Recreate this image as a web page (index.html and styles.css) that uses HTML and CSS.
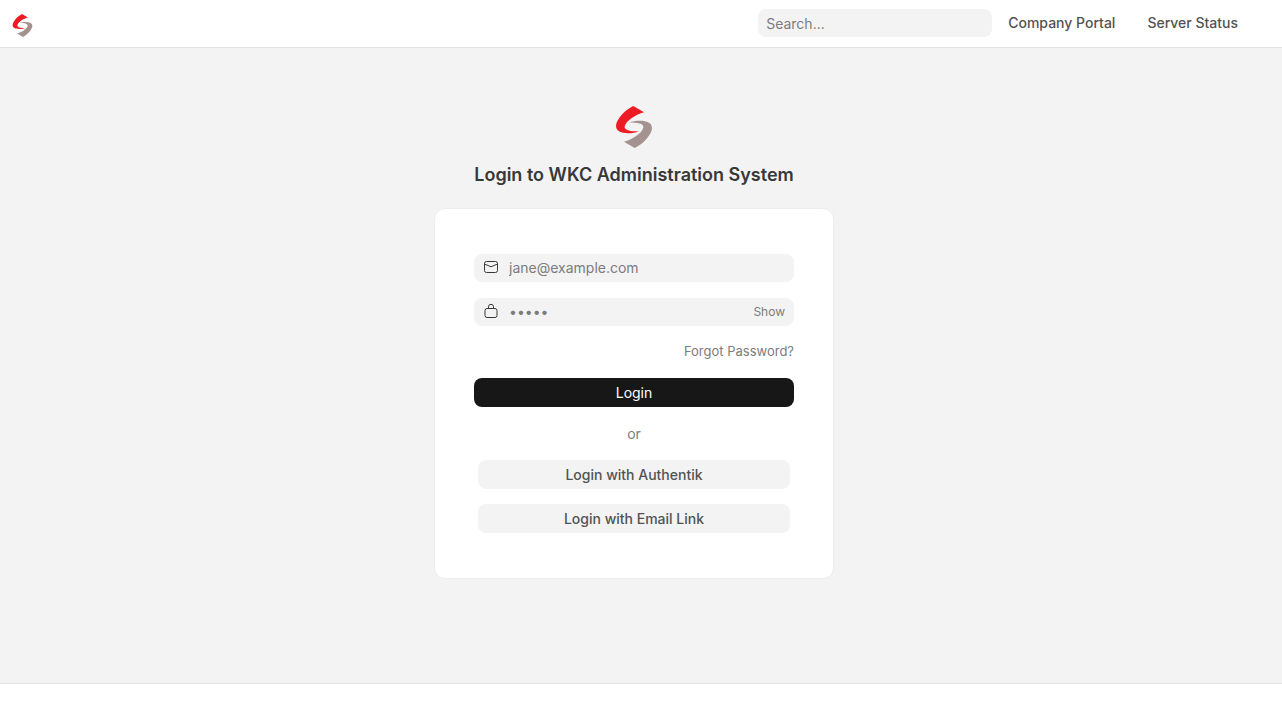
FILE: index.html
```html
<!DOCTYPE html>
<html lang="en">
<head>
<meta charset="utf-8">
<meta name="viewport" content="width=device-width, initial-scale=1">
<title>Login</title>
<link rel="stylesheet" href="styles.css">
</head>
<body>
<svg class="symbols" aria-hidden="true">
  <symbol id="logo" viewBox="0 0 36 42">
    <path fill="#ed1c24" d="M17.3 0 28 6.3C20 8.500 10 14.500 8.700 20.500C8 24.500 15 25.500 23 25.400C17 27.500 8 28 3.500 25.500C-0.800 23.500-0.800 18.500 2 14C5 8.500 11 3 17.300 0Z"/>
    <path fill="#a3928f" d="M18.700 42 8 35.700C16 33.500 26 27.500 27.300 21.500C28 17.500 21 16.500 13 16.600C19 14.500 28 14 32.500 16.500C36.800 18.500 36.800 23.500 34 28C31 33.500 25 39 18.700 42Z"/>
  </symbol>
</svg>
<header class="navbar">
  <a class="brand" href="#" aria-label="Home"><svg class="brand-logo"><use href="#logo"/></svg></a>
  <nav class="nav">
    <input class="search" type="search" placeholder="Search..." aria-label="Search">
    <a class="nav-link" href="#">Company Portal</a>
    <a class="nav-link" href="#">Server Status</a>
  </nav>
</header>
<main class="page">
  <div class="head">
    <svg class="app-logo" aria-hidden="true"><use href="#logo"/></svg>
    <h1 class="title">Login to WKC Administration System</h1>
  </div>
  <form class="card">
    <div class="field">
      <svg class="icon" viewBox="0 0 16 16" aria-hidden="true"><rect x="1.500" y="2.500" width="13" height="11" rx="2"/><path d="M1.500 5 8 7.800 14.500 5"/></svg>
      <input class="input" type="email" placeholder="jane@example.com" aria-label="Email">
    </div>
    <div class="field">
      <svg class="icon" viewBox="0 0 16 16" aria-hidden="true"><rect x="2" y="5.500" width="12" height="9" rx="2"/><path d="M5.500 5.500V3.800a2.500 2.500 0 0 1 5 0v1.700"/></svg>
      <input class="input" type="password" placeholder="•••••" aria-label="Password">
      <button class="show" type="button">Show</button>
    </div>
    <a class="forgot" href="#">Forgot Password?</a>
    <button class="btn btn-primary" type="button">Login</button>
    <p class="or">or</p>
    <div class="alternatives">
      <button class="btn" type="button">Login with Authentik</button>
      <button class="btn" type="button">Login with Email Link</button>
    </div>
  </form>
</main>
<footer class="footer"></footer>
</body>
</html>
```

FILE: styles.css
```css
* { box-sizing: border-box; }

body {
  margin: 0;
  min-height: 100vh;
  display: flex;
  flex-direction: column;
  background: #fff;
  color: #525252;
  font: 14px/20px Inter, "Liberation Sans", sans-serif;
}

a { color: inherit; text-decoration: none; }
button, input { font: inherit; border: 0; }
input::placeholder { color: #7c7c7c; opacity: 1; }

.symbols { position: absolute; width: 0; height: 0; }

.navbar {
  display: flex;
  align-items: center;
  justify-content: space-between;
  padding: 9px 44px 10px 12px;
  border-bottom: 1px solid #e2e2e2;
}
.brand { display: flex; padding-top: 4px; }
.brand-logo { width: 21px; height: 23px; }
.nav { display: flex; align-items: center; gap: 32px; font-weight: 500; }
.search {
  width: 234px;
  height: 28px;
  margin-right: -16px;
  padding: 0 8px;
  border-radius: 8px;
  background: #f3f3f3;
  font-weight: 400;
}

.page {
  flex: 1;
  display: flex;
  flex-direction: column;
  align-items: center;
  padding: 58px 14px 0 0;
  background: #f3f3f3;
}
.head { display: flex; flex-direction: column; align-items: center; gap: 14px; }
.app-logo { width: 36px; height: 42px; }
.title { margin: 0; font-size: 18px; line-height: 26px; font-weight: 600; color: #383838; }

.card {
  display: flex;
  flex-direction: column;
  width: 100%;
  max-width: 400px;
  margin-top: 20px;
  padding: 45px 39px;
  border: 1px solid #ededed;
  border-radius: 11px;
  background: #fff;
}
.field {
  display: flex;
  align-items: center;
  gap: 10px;
  height: 28px;
  margin-bottom: 16px;
  padding: 0 9px;
  border-radius: 8px;
  background: #f3f3f3;
}
.icon {
  flex: none;
  width: 16px;
  height: 16px;
  margin-bottom: 2px;
  fill: none;
  stroke: #383838;
  stroke-linejoin: round;
}
.input { flex: 1; min-width: 0; padding: 0; background: transparent; }
.show { padding: 0; background: transparent; color: #7c7c7c; font-size: 12px; }
.forgot { align-self: flex-end; color: #7c7c7c; font-size: 13px; line-height: 18px; }
.btn {
  height: 29px;
  padding: 0 8px;
  border-radius: 8px;
  background: #f3f3f3;
  color: #525252;
  font-weight: 500;
}
.btn-primary { margin-top: 18px; background: #171717; color: #fff; font-weight: 400; }
.or { margin: 17px 0 16px; text-align: center; color: #7c7c7c; }
.alternatives { display: flex; flex-direction: column; gap: 15px; padding: 0 4px; }

.footer { height: 44px; border-top: 1px solid #e2e2e2; }
```
